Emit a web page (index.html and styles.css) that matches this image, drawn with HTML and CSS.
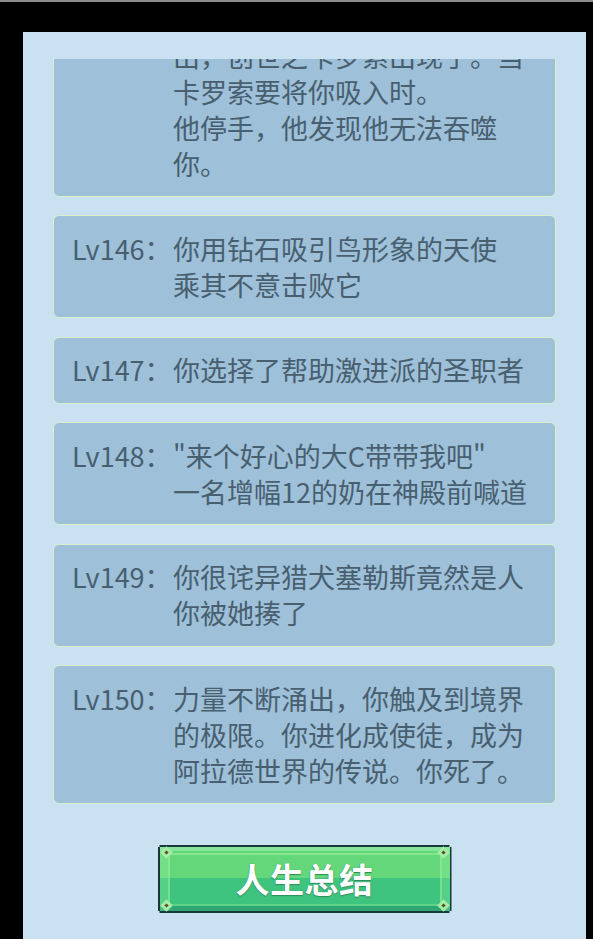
FILE: index.html
```html
<!DOCTYPE html>
<html lang="zh-CN">
<head>
<meta charset="utf-8">
<title>人生履历</title>
<link rel="stylesheet" href="styles.css">
</head>
<body>
<div class="screen">
  <div class="panel">
    <div class="log">
      <div class="log-track">
        <div class="entry">
          <span class="lv">Lv145：</span>
          <span class="txt">你深入无底坑道，黑暗之力涌出，创世之卡罗索出现了。当卡罗索要将你吸入时。<br>他停手，他发现他无法吞噬你。</span>
        </div>
        <div class="entry">
          <span class="lv">Lv146：</span>
          <span class="txt">你用钻石吸引鸟形象的天使<br>乘其不意击败它</span>
        </div>
        <div class="entry">
          <span class="lv">Lv147：</span>
          <span class="txt">你选择了帮助激进派的圣职者</span>
        </div>
        <div class="entry">
          <span class="lv">Lv148：</span>
          <span class="txt">"来个好心的大C带带我吧"<br>一名增幅12的奶在神殿前喊道</span>
        </div>
        <div class="entry">
          <span class="lv">Lv149：</span>
          <span class="txt">你很诧异猎犬塞勒斯竟然是人<br>你被她揍了</span>
        </div>
        <div class="entry">
          <span class="lv">Lv150：</span>
          <span class="txt">力量不断涌出，你触及到境界的极限。你进化成使徒，成为阿拉德世界的传说。你死了。</span>
        </div>
      </div>
    </div>
    <div class="actions">
      <button class="pixel-btn" type="button">
        <span class="pixel-face"></span>
        <span class="pixel-frame"></span>
        <span class="rivet rivet-tl"></span>
        <span class="rivet rivet-tr"></span>
        <span class="rivet rivet-bl"></span>
        <span class="rivet rivet-br"></span>
        <span class="pixel-label">人生总结</span>
      </button>
    </div>
  </div>
</div>
</body>
</html>
```

FILE: styles.css
```css
html, body {
  margin: 0;
  padding: 0;
  height: 100%;
}

body {
  background: #000;
  font-family: "Noto Sans CJK SC", "Noto Sans", sans-serif;
  overflow: hidden;
}

.screen {
  height: 100%;
  border-top: 2px solid #8a8a8a;
  box-sizing: border-box;
  padding: 30px 7px 0 23px;
}

.panel {
  background: #c9e1f0;
  height: 100%;
  display: flex;
  flex-direction: column;
  align-items: center;
  padding-top: 27px;
  box-sizing: border-box;
}

/* scrolled log: pinned to its newest entry */
.log {
  width: 503px;
  height: 745px;
  overflow: hidden;
  display: flex;
  flex-direction: column;
  justify-content: flex-end;
}

.log-track {
  display: flex;
  flex-direction: column;
  gap: 18.4px;
}

.entry {
  display: flex;
  background: #9ec0d8;
  border: 1px solid #d9efc9;
  border-radius: 6px;
  padding: 14.5px 24px 14.5px 18px;
  font-size: 27px;
  line-height: 36px;
  color: #485f70;
}

.lv {
  flex: none;
  width: 101px;
  white-space: nowrap;
}

.txt {
  flex: 1;
  min-width: 0;
}

.actions {
  margin-top: 41px;
}

/* pixel-art green button */
.pixel-btn {
  position: relative;
  display: block;
  width: 294px;
  height: 68px;
  padding: 0;
  border: 0;
  background: #18393a;
  cursor: pointer;
  clip-path: polygon(2px 0, calc(100% - 2px) 0, calc(100% - 2px) 2px, 100% 2px,
    100% calc(100% - 2px), calc(100% - 2px) calc(100% - 2px), calc(100% - 2px) 100%,
    2px 100%, 2px calc(100% - 2px), 0 calc(100% - 2px), 0 2px, 2px 2px);
  font-family: inherit;
}

.pixel-face {
  position: absolute;
  inset: 2px;
  background: linear-gradient(to bottom,
    #86e598 0, #86e598 4px,
    #63d779 4px, #63d779 48%,
    #3ec47e 48%, #3ec47e calc(100% - 5px),
    #2ea774 calc(100% - 5px));
}

.pixel-face::before,
.pixel-face::after {
  content: "";
  position: absolute;
  top: 0;
  bottom: 0;
  width: 8px;
  background: rgba(160, 245, 170, 0.25);
}

.pixel-face::before { left: 0; }
.pixel-face::after { right: 0; }

.pixel-frame {
  position: absolute;
  top: 8px;
  bottom: 7px;
  left: 10px;
  right: 10px;
  border: 2px solid rgba(160, 240, 160, 0.6);
  border-bottom-color: rgba(160, 240, 160, 0.35);
}

.rivet {
  position: absolute;
  width: 9px;
  height: 9px;
  background: #a3eca6;
  transform: rotate(45deg);
}

.rivet::after {
  content: "";
  position: absolute;
  left: 3px;
  top: 3px;
  width: 3px;
  height: 3px;
  background: #5c4a22;
}

.rivet-tl { left: 4px; top: 3px; }
.rivet-tr { right: 4px; top: 3px; }
.rivet-bl { left: 4px; bottom: 3px; }
.rivet-br { right: 4px; bottom: 3px; }

.pixel-label {
  position: relative;
  display: block;
  text-align: center;
  line-height: 68px;
  font-size: 34px;
  font-weight: 700;
  color: #fff;
  letter-spacing: 0.5px;
  text-shadow: 0 0 1px #2f8a5e, 0 1px 1px #2f8a5e;
}
```
